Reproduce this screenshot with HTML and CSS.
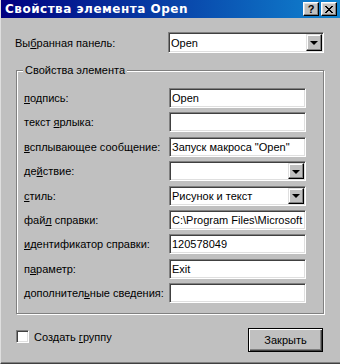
FILE: index.html
```html
<!DOCTYPE html>
<html lang="ru">
<head>
    <meta charset="UTF-8">
    <title>Свойства элемента Open</title>
    <link rel="stylesheet" href="styles.css">
</head>
<body>
    <div class="window">
        <!-- заголовок окна -->
        <div class="titlebar">
            <span class="title">Свойства элемента Open</span>
            <div class="caption-buttons">
                <span class="cap-btn help">?</span>
                <span class="cap-btn close">
                    <svg width="8" height="7" viewBox="0 0 8 7"><path d="M0 0h2v1h1v1h2V1h1V0h2v1H7v1H6v1H5v1h1v1h1v1h1v1H6V6H5V5H3v1H2v1H0V6h1V5h1V4h1V3H2V2H1V1H0z" fill="#000"/></svg>
                </span>
            </div>
        </div>

        <div class="content">
            <div class="top-row">
                <span class="label">Вы<u>б</u>ранная панель:</span>
                <div class="field combo wide">
                    <span class="value">Open</span>
                    <span class="drop"><i></i></span>
                </div>
            </div>

            <div class="group">
                <span class="legend">Свойства элемента</span>
                <div class="row">
                    <span class="label"><u>п</u>одпись:</span>
                    <div class="field"><span class="value">Open</span></div>
                </div>
                <div class="row">
                    <span class="label">текст <u>я</u>рлыка:</span>
                    <div class="field"></div>
                </div>
                <div class="row">
                    <span class="label"><u>в</u>сплывающее сообщение:</span>
                    <div class="field"><span class="value">Запуск макроса "Open"</span></div>
                </div>
                <div class="row">
                    <span class="label">де<u>й</u>ствие:</span>
                    <div class="field combo"><span class="value"></span><span class="drop"><i></i></span></div>
                </div>
                <div class="row">
                    <span class="label"><u>с</u>тиль:</span>
                    <div class="field combo"><span class="value">Рисунок и текст</span><span class="drop"><i></i></span></div>
                </div>
                <div class="row">
                    <span class="label">фай<u>л</u> справки:</span>
                    <div class="field"><span class="value">C:\Program Files\Microsoft Office</span></div>
                </div>
                <div class="row">
                    <span class="label"><u>и</u>дентификатор справки:</span>
                    <div class="field"><span class="value">120578049</span></div>
                </div>
                <div class="row">
                    <span class="label">п<u>а</u>раметр:</span>
                    <div class="field"><span class="value">Exit</span></div>
                </div>
                <div class="row">
                    <span class="label">дополнител<u>ь</u>ные сведения:</span>
                    <div class="field"></div>
                </div>
            </div>

            <div class="footer">
                <label class="check">
                    <span class="box"></span>
                    <span>Создать <u>г</u>руппу</span>
                </label>
                <div class="button default">Закрыть</div>
            </div>
        </div>
    </div>
</body>
</html>
```

FILE: styles.css
```css
body {
    margin: 0;
    font-family: "Liberation Sans", Arial, sans-serif;
    font-size: 11px;
    color: #000;
    background-color: #c0c0c0;
}

.window {
    width: 340px;
    height: 364px;
    box-sizing: border-box;
    background-color: #c0c0c0;
    border-left: 1px solid #dfdfdf;
    border-bottom: 1px solid #404040;
    box-shadow: inset 0 -1px #808080;
    overflow: hidden;
}

.titlebar {
    height: 18px;
    margin-left: -1px;
    background: linear-gradient(to right, #000080, #1084d0);
    display: flex;
    align-items: center;
    justify-content: space-between;
    padding: 0 3px 0 5px;
}

.title {
    color: #fff;
    font-weight: bold;
    font-size: 12px;
    font-family: "DejaVu Sans", Arial, sans-serif;
    letter-spacing: 0.5px;
}

.caption-buttons {
    display: flex;
    gap: 2px;
}

.cap-btn {
    width: 16px;
    height: 14px;
    box-sizing: border-box;
    background-color: #c0c0c0;
    border: 1px solid;
    border-color: #fff #000 #000 #fff;
    box-shadow: inset -1px -1px #808080, inset 1px 1px #dfdfdf;
    display: flex;
    align-items: center;
    justify-content: center;
}

.cap-btn.help {
    font-weight: bold;
    font-size: 11px;
    line-height: 1;
}

.content {
    padding: 14px 0 0 14px;
}

.top-row {
    display: flex;
    align-items: center;
    height: 21px;
}

.top-row .label {
    width: 153px;
}

.label u, .check u {
    text-decoration: underline;
    text-underline-offset: 1px;
}

.field {
    width: 137px;
    height: 20px;
    box-sizing: border-box;
    background-color: #fff;
    border: 1px solid;
    border-color: #808080 #fff #fff #808080;
    box-shadow: inset 1px 1px #404040, inset -1px -1px #dfdfdf;
    display: flex;
    align-items: center;
    overflow: hidden;
    white-space: nowrap;
}

.field.wide {
    width: 156px;
    height: 21px;
}

.value {
    flex: 1;
    padding-left: 2px;
    overflow: hidden;
}

.drop {
    width: 16px;
    height: 16px;
    margin-right: 1px;
    box-sizing: border-box;
    background-color: #c0c0c0;
    border: 1px solid;
    border-color: #dfdfdf #000 #000 #dfdfdf;
    box-shadow: inset -1px -1px #808080, inset 1px 1px #fff;
    display: flex;
    align-items: center;
    justify-content: center;
}

.field.wide .drop {
    height: 17px;
}

.drop i {
    width: 0;
    height: 0;
    border-left: 4px solid transparent;
    border-right: 4px solid transparent;
    border-top: 4px solid #000;
    margin-top: 1px;
}

.group {
    position: relative;
    width: 308px;
    height: 244px;
    margin-top: 17px;
    margin-left: 1px;
    box-sizing: border-box;
    border: 1px solid #808080;
    box-shadow: inset 1px 1px #fff, 1px 1px #fff;
    padding: 17px 0 0 7px;
    display: flex;
    flex-direction: column;
    gap: 4.375px;
}

.legend {
    position: absolute;
    top: -7px;
    left: 6px;
    padding: 0 2px;
    background-color: #c0c0c0;
    line-height: 13px;
}

.row {
    display: flex;
    align-items: center;
}

.row .label {
    width: 145px;
    white-space: nowrap;
}

.footer {
    display: flex;
    justify-content: space-between;
    align-items: flex-start;
    margin-top: 14px;
    padding: 0 17px 0 1px;
}

.check {
    display: flex;
    align-items: center;
    gap: 5px;
    margin-top: 2px;
}

.box {
    width: 13px;
    height: 13px;
    box-sizing: border-box;
    background-color: #fff;
    border: 1px solid;
    border-color: #808080 #fff #fff #808080;
    box-shadow: inset 1px 1px #404040, inset -1px -1px #dfdfdf;
}

.button {
    width: 75px;
    height: 24px;
    box-sizing: border-box;
    background-color: #c0c0c0;
    display: flex;
    align-items: center;
    justify-content: center;
    border: 1px solid #000;
    box-shadow: inset 1px 1px #fff, inset -1px -1px #404040, inset -2px -2px #808080;
}
```
